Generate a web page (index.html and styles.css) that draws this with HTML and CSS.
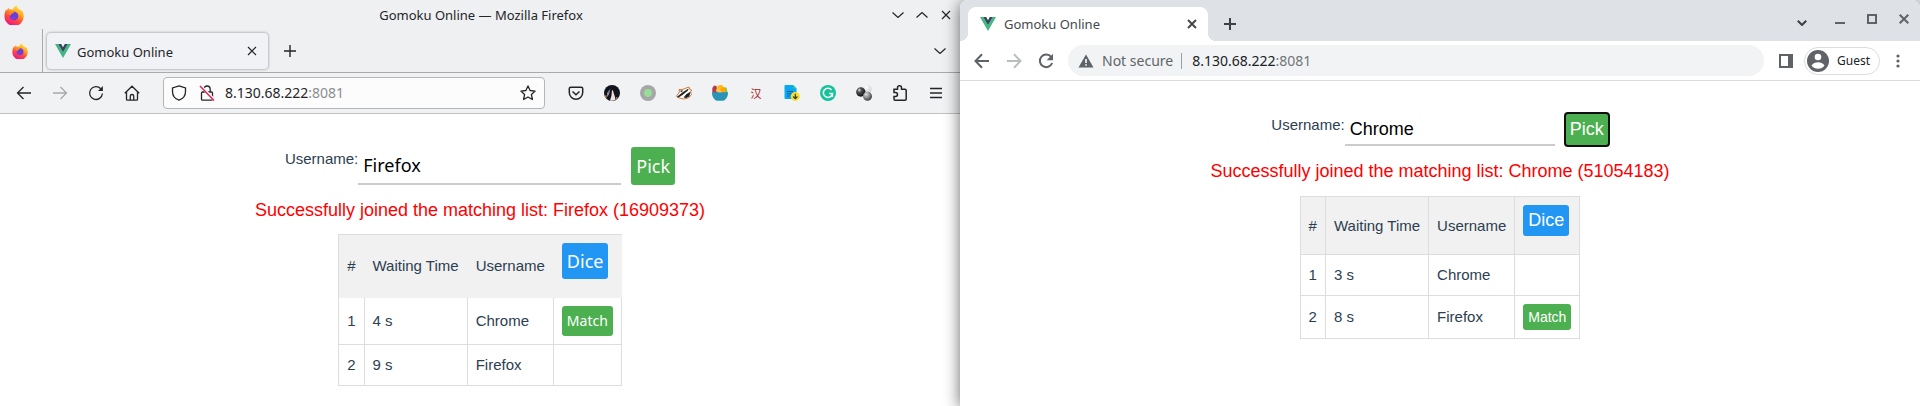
FILE: index.html
```html
<!DOCTYPE html>
<html lang="en">
<head>
<meta charset="utf-8">
<title>Gomoku Online</title>
<link rel="stylesheet" href="styles.css">
</head>
<body>
<svg class="defs" aria-hidden="true">
  <defs>
    <linearGradient id="flame" x1="0.8" y1="0" x2="0.3" y2="1">
      <stop offset="0" stop-color="#fff44f"/><stop offset="0.35" stop-color="#ffa823"/><stop offset="0.65" stop-color="#ff4a3d"/><stop offset="1" stop-color="#f0108a"/>
    </linearGradient>
    <radialGradient id="dark-ball" cx="0.35" cy="0.3" r="0.7"><stop offset="0" stop-color="#eee"/><stop offset="0.3" stop-color="#555"/><stop offset="1" stop-color="#111"/></radialGradient>
    <radialGradient id="gray-ball" cx="0.35" cy="0.3" r="0.7"><stop offset="0" stop-color="#ddd"/><stop offset="1" stop-color="#444"/></radialGradient>
    <radialGradient id="light-ball" cx="0.35" cy="0.3" r="0.8"><stop offset="0" stop-color="#fff"/><stop offset="1" stop-color="#ccc"/></radialGradient>
    <symbol id="fox" viewBox="0 0 20 20">
      <path d="M12.500 0.200c.3 1.700 1.300 2.700 2.400 3.800.9.300 1.600.9 1.900 1.600l.8-.6c1.300 1.500 2 3.500 2 5.500A9.600 9.400 0 1 1 .6 10c0-2.200.7-4.400 1.900-6l.2 1.700C3.400 4.200 4.300 3.300 5.100 2.800v1.700c1.300-.3 2.600-.2 3.700.2 1-2 2-3.800 3.700-4.500z" fill="url(#flame)"/>
      <circle cx="10" cy="11" r="4.300" fill="#6b3fd6"/>
      <path d="M5.500 6.700c1.500-.8 3.500-.7 4.700.2-.2 1.400-1.800 1.400-2.900 1.800-.5.600.2 1.600-.8 1.700-1.200-.8-1.700-2.300-1-3.700z" fill="#ff8a1e"/>
      <path d="M7 12.500c1.300.8 2.700.6 4-.2-.5 1.900-3 2.300-4 .2z" fill="#b833e1"/>
    </symbol>
    <symbol id="vue" viewBox="0 0 16 14">
      <path d="M0 0h3.200L8 8.300 12.800 0H16L8 13.900z" fill="#41b883"/>
      <path d="M3.200 0h3L8 3.200 9.800 0h3L8 8.300z" fill="#34495e"/>
    </symbol>
    <symbol id="chev" viewBox="0 0 12 6"><path d="M.5.500 6 5.500 11.500.5" fill="none" stroke="currentColor" stroke-width="1.200"/></symbol>
    <symbol id="cross" viewBox="0 0 10 10"><path d="m1 1 8 8M9 1 1 9" fill="none" stroke="currentColor" stroke-width="1.200"/></symbol>
    <symbol id="plus" viewBox="0 0 12 12"><path d="M6 0v12M0 6h12" fill="none" stroke="currentColor" stroke-width="1.400"/></symbol>
  </defs>
</svg>

<main class="desktop">
  <section class="window firefox" aria-label="Mozilla Firefox">
    <header class="ff-title">
      <svg class="i20"><use href="#fox"/></svg>
      <span>Gomoku Online — Mozilla Firefox</span>
      <div class="ff-controls">
        <button aria-label="Minimize"><svg width="12" height="6"><use href="#chev"/></svg></button>
        <button aria-label="Maximize"><svg class="flip" width="12" height="6"><use href="#chev"/></svg></button>
        <button aria-label="Close"><svg width="10" height="10"><use href="#cross"/></svg></button>
      </div>
    </header>

    <nav class="ff-tabs" aria-label="Tabs">
      <button class="ff-pinned" aria-label="Firefox"><svg class="i16"><use href="#fox"/></svg></button>
      <div class="ff-tab">
        <svg width="16" height="14"><use href="#vue"/></svg>
        <span>Gomoku Online</span>
        <button aria-label="Close tab"><svg width="10" height="10"><use href="#cross"/></svg></button>
      </div>
      <button class="ff-new" aria-label="New tab"><svg width="12" height="12"><use href="#plus"/></svg></button>
      <button class="ff-all" aria-label="List all tabs"><svg width="12" height="6"><use href="#chev"/></svg></button>
    </nav>

    <div class="ff-bar">
      <div class="ff-nav">
        <button aria-label="Back"><svg class="i16 line" viewBox="0 0 16 16"><path d="M15 8H1.500M7.500 2 1.500 8l6 6"/></svg></button>
        <button aria-label="Forward" disabled><svg class="i16 line" viewBox="0 0 16 16"><path d="M1 8h13.500M8.500 2l6 6-6 6"/></svg></button>
        <button aria-label="Reload"><svg class="i16 line" viewBox="0 0 16 16"><path d="M12.800 3.800A6.400 6.400 0 1 0 14.400 8.500"/><path d="M14.900 1v5H10z" fill="currentColor" stroke="none"/></svg></button>
        <button aria-label="Home"><svg class="i16 line" viewBox="0 0 16 16"><path d="M.8 8.200 8 1.200l7.200 7M2.500 7v7.200q0 1 1 1h9q1 0 1-1V7M6.300 15v-4q0-1.500 1.700-1.500T9.700 11v4"/></svg></button>
      </div>
      <div class="ff-url">
        <svg class="i16 line" viewBox="0 0 16 16"><path d="M8 .9 14.500 3v3.500C14.500 10.500 12 13.800 8 15.200 4 13.800 1.500 10.500 1.500 6.500V3z"/></svg>
        <svg class="i16 line" viewBox="0 0 16 16"><path d="M4.800 7V4.200a3.200 3.200 0 0 1 6.400 0V7M3.500 7h9q1 0 1 1v6.200q0 1-1 1h-9q-1 0-1-1V8q0-1 1-1z"/><path d="M1.500 1l14 14" stroke="#fcfcfc" stroke-width="3"/><path d="M1 1l14 14.500" stroke="#e22850" stroke-width="1.500"/></svg>
        <div class="address" role="textbox" aria-label="Address">8.130.68.222<span>:8081</span></div>
        <button aria-label="Bookmark"><svg class="i16 line" viewBox="0 0 16 16"><path d="m8 .9 2.100 4.600 5 .6-3.700 3.400 1 5L8 12l-4.400 2.500 1-5L.9 6.100l5-.6z" stroke-linejoin="round"/></svg></button>
      </div>
      <div class="ff-ext">
        <button aria-label="Pocket"><svg class="i16 line" viewBox="0 0 16 16"><path d="M2.500 2.300h11q1.200 0 1.200 1.200V7.500a6.700 6.700 0 0 1-13.400 0V3.500q0-1.200 1.200-1.200zM4.500 6.500 8 9.700l3.500-3.200" stroke-width="1.500"/></svg></button>
        <button aria-label="Profile picture"><svg class="i16" viewBox="0 0 16 16"><circle cx="8" cy="8" r="8" fill="#11131d"/><path d="M8 5q1.500.3 1.500 2.500L11 12l.5 2.800q-3 1.500-5.500.7l1.500-5z" fill="#f2dfe0"/><path d="M3 8 6.500 3.500 5 9.500 3 12z" fill="#8a879a"/><path d="M.6 10.500 2.500 10.500v3z" fill="#e0a057"/><path d="M12 12l2.300 1-2 1.700z" fill="#b98563"/></svg></button>
        <button aria-label="Status"><svg class="i16" viewBox="0 0 16 16"><circle cx="8" cy="8" r="8" fill="#a6a6a6"/><circle cx="8" cy="8" r="4" fill="#98dc98"/></svg></button>
        <button aria-label="Badger"><svg class="i16" viewBox="0 0 16 16"><path d="M.5 11 3.500 7 3 4.500 6 4.600 13 2l.7 2.500 2 .5-1.200 2 1 2.500-3 3.500-5 1-6-1.500z" fill="#fff" stroke="#d27a3b"/><path d="M1 11.800 7 7l5.500-3.500-.5 2L6.500 10l-4 2.500zM7.500 12.500l3-3.500 4-2.200-1.200 4.700-3 1.500zM4.300 5.600l3-.2L5 7.500z" fill="#222"/></svg></button>
        <button aria-label="Bowl"><svg class="i16" viewBox="0 0 16 16"><path d="M.3 3 2 .6 4.500 1 6 8H.3z" fill="#b63a4c"/><path d="M11 3q2.500-1.500 3.500 0L15.700 8H11z" fill="#7dc540"/><circle cx="8.500" cy="3.300" r="3.300" fill="#ffb914"/><circle cx="11.300" cy="5" r="2.600" fill="#ffa500"/><circle cx="6" cy="5.300" r="2" fill="#ffc83d"/><path d="M0 7.300h16C16 12 14 14.500 11.500 15.800h-7C2 14.500 0 12 0 7.300z" fill="#2b93b5"/></svg></button>
        <button class="han" aria-label="Chinese converter" lang="zh">汉</button>
        <button aria-label="Download document"><svg class="i16" viewBox="0 0 16 16"><path d="M1.500 0H9l3.500 3.500V14h-11q-1 0-1-1V1q0-1 1-1z" fill="#09a8f0"/><path d="M9 0l3.500 3.500H9z" fill="#15d0a0"/><path d="M3 6.500h6M3 8.700h5M3 11h3" stroke="#075a9d"/><circle cx="11.300" cy="11.400" r="4.500" fill="#fddc2e"/><path d="M11.300 8.700v4.800M9.200 11.500l2.100 2.200 2.100-2.200" fill="none" stroke="#333" stroke-width="1.100"/></svg></button>
        <button aria-label="Grammar"><svg class="i16" viewBox="0 0 16 16"><circle cx="8" cy="8" r="8" fill="#15c39a"/><path d="M11.600 5A4.600 4.600 0 1 0 12.500 8.600H9.200M12.400 8.600v3.400" fill="none" stroke="#fff" stroke-width="1.500"/></svg></button>
        <button aria-label="Spheres"><svg class="i16" viewBox="0 0 16 16"><circle cx="11.500" cy="4" r="4" fill="url(#light-ball)"/><circle cx="4.800" cy="7" r="4.700" fill="url(#dark-ball)"/><circle cx="11.500" cy="11.200" r="4.500" fill="url(#gray-ball)"/></svg></button>
        <button aria-label="Extensions"><svg class="i16 line" viewBox="0 0 16 16"><path d="M2 4.200h3.500V2.800a2 2 0 0 1 4 0V4.200H13q1.200 0 1.200 1.200v8.600q0 1.200-1.200 1.200H3.200Q2 15.200 2 14v-2.600h1.600a1.900 1.900 0 0 0 0-3.800H2z" stroke-width="1.500"/></svg></button>
        <button aria-label="Menu"><svg class="i16 line" viewBox="0 0 16 16"><path d="M2 3.500h12M2 8h12M2 12.500h12" stroke-width="1.400"/></svg></button>
      </div>
    </div>

    <div class="page">
      <form class="join">
        <label for="ff-name">Username:</label>
        <input id="ff-name" type="text" value="Firefox">
        <button class="btn green" type="button">Pick</button>
      </form>
      <p class="message">Successfully joined the matching list: Firefox (16909373)</p>
      <table>
        <thead>
          <tr><th>#</th><th>Waiting Time</th><th>Username</th><th><button class="btn blue">Dice</button></th></tr>
        </thead>
        <tbody>
          <tr><td>1</td><td>4 s</td><td>Chrome</td><td><button class="btn green small">Match</button></td></tr>
          <tr><td>2</td><td>9 s</td><td>Firefox</td><td></td></tr>
        </tbody>
      </table>
    </div>
  </section>

  <section class="window chrome" aria-label="Chrome">
    <header class="ch-strip">
      <div class="ch-tab">
        <svg width="16" height="14"><use href="#vue"/></svg>
        <span>Gomoku Online</span>
        <button aria-label="Close tab"><svg width="10" height="10" class="bold" viewBox="0 0 10 10"><path d="m1 1 8 8M9 1 1 9"/></svg></button>
      </div>
      <button class="ch-new" aria-label="New tab"><svg width="12" height="12" class="bold" viewBox="0 0 12 12"><path d="M6 0v12M0 6h12"/></svg></button>
      <div class="ch-controls">
        <button class="ch-search" aria-label="Search tabs"><svg width="10" height="6" class="bold" viewBox="0 0 10 6"><path d="m.8.800 4.200 4.200L9.200.8"/></svg></button>
        <button aria-label="Minimize"><svg width="10" height="10" class="bold" viewBox="0 0 10 10"><path d="M0 9h10"/></svg></button>
        <button aria-label="Maximize"><svg width="10" height="10" class="bold" viewBox="0 0 10 10"><path d="M1 1h8v8H1z"/></svg></button>
        <button aria-label="Close"><svg width="10" height="10" class="bold" viewBox="0 0 10 10"><path d="m.7.700 8.600 8.600M9.300.7.700 9.300"/></svg></button>
      </div>
    </header>

    <div class="ch-bar">
      <button aria-label="Back"><svg class="i16 bold" viewBox="0 0 16 16"><path d="M15 8H2M8 1.300 1.500 8 8 14.700"/></svg></button>
      <button aria-label="Forward" disabled><svg class="i16 bold" viewBox="0 0 16 16"><path d="M1 8h13M8 1.300 14.500 8 8 14.700"/></svg></button>
      <button aria-label="Reload"><svg class="i16 bold" viewBox="0 0 16 16"><path d="M13.200 4A6.300 6.300 0 1 0 14.100 10"/><path d="M15 .8v6.400H8.600z" fill="currentColor" stroke="none"/></svg></button>
      <div class="omnibox">
        <svg class="i16" viewBox="0 0 16 16"><path d="M8 1.500 15.500 14.500H.5z" fill="#5f6368"/><path d="M8 6v4M8 11.200v1.600" stroke="#fff" stroke-width="1.600"/></svg>
        <span class="insecure">Not secure</span>
        <div class="address" role="textbox" aria-label="Address">8.130.68.222<span>:8081</span></div>
      </div>
      <button class="ch-side" aria-label="Side panel"><svg width="14" height="14" viewBox="0 0 14 14"><path d="M0 0h14v14H0zM2 2v10h7V2z" fill="currentColor" fill-rule="evenodd"/></svg></button>
      <button class="guest"><svg width="22" height="22" viewBox="0 0 22 22"><circle cx="11" cy="11" r="11" fill="#5f6368"/><circle cx="11" cy="7" r="3.300" fill="#fff"/><path d="M4.500 15.500Q7 12.300 11 12.300t6.500 3.200Q15 18.800 11 18.800T4.500 15.500z" fill="#fff"/></svg>Guest</button>
      <button class="ch-menu" aria-label="Menu"><svg class="i16" viewBox="0 0 16 16" fill="currentColor"><circle cx="8" cy="3" r="1.600"/><circle cx="8" cy="8" r="1.600"/><circle cx="8" cy="13" r="1.600"/></svg></button>
    </div>

    <div class="page">
      <form class="join">
        <label for="ch-name">Username:</label>
        <input id="ch-name" type="text" value="Chrome">
        <button class="btn green focused" type="button">Pick</button>
      </form>
      <p class="message">Successfully joined the matching list: Chrome (51054183)</p>
      <table>
        <thead>
          <tr><th>#</th><th>Waiting Time</th><th>Username</th><th><button class="btn blue">Dice</button></th></tr>
        </thead>
        <tbody>
          <tr><td>1</td><td>3 s</td><td>Chrome</td><td></td></tr>
          <tr><td>2</td><td>8 s</td><td>Firefox</td><td><button class="btn green small">Match</button></td></tr>
        </tbody>
      </table>
    </div>
  </section>
</main>
</body>
</html>
```

FILE: styles.css
```css
* { box-sizing: border-box; }

body {
  margin: 0;
  font: 13px/20px "Noto Sans", sans-serif;
  color: #232629;
  background: #eff0f1;
}

button {
  display: flex;
  align-items: center;
  justify-content: center;
  flex: none;
  margin: 0;
  padding: 0;
  border: 0;
  background: none;
  color: inherit;
  font: inherit;
}

svg { display: block; flex: none; }

.defs { position: absolute; width: 0; height: 0; }
.i16 { width: 16px; height: 16px; }
.i20 { width: 20px; height: 20px; }
.line { fill: none; stroke: currentColor; stroke-width: 1.3; }
.bold { fill: none; stroke: currentColor; stroke-width: 2; }
.flip { transform: scaleY(-1); }

.desktop {
  display: grid;
  grid-template-columns: 1fr 1fr;
  min-height: 100vh;
  overflow: hidden;
}

.window { display: flex; flex-direction: column; min-width: 0; }

/* Firefox window */
.firefox { background: #eff0f2; }

.ff-title {
  display: grid;
  grid-template-columns: 1fr auto 1fr;
  align-items: center;
  height: 29px;
  padding: 0 2px 0 4px;
}

.ff-controls { display: flex; justify-content: flex-end; }
.ff-controls button { width: 24px; height: 24px; }

.ff-tabs {
  display: flex;
  align-items: center;
  height: 44px;
  border-bottom: 1px solid #a9aaac;
}

.ff-pinned {
  align-self: stretch;
  width: 43px;
  padding-right: 2px;
  border-right: 1px solid #a9aaac;
}

.ff-tab {
  display: flex;
  align-items: center;
  gap: 6px;
  width: 221px;
  height: 36px;
  margin: 0 8px 0 4px;
  padding: 0 6px 0 8px;
  border-radius: 4px;
  background: #f1f2f5;
  box-shadow: 0 0 3px rgba(0, 0, 0, 0.45);
}

.ff-tab span { flex: 1; padding-top: 2px; }
.ff-tab button { width: 20px; height: 20px; }
.ff-new { width: 28px; height: 28px; }
.ff-all { width: 32px; height: 32px; margin: 0 4px 0 auto; }

.ff-bar {
  display: flex;
  align-items: center;
  height: 41px;
  padding: 0 6px;
  border-bottom: 1px solid #bfc0c2;
  background: #f1f2f4;
}

.ff-nav, .ff-ext { display: flex; }
.ff-nav button, .ff-ext button { width: 36px; height: 32px; }
.ff-nav button:disabled { color: #a8a9ab; }

.ff-url {
  display: flex;
  align-items: center;
  gap: 12px;
  flex: 1;
  height: 32px;
  margin: 0 13px;
  padding: 0 8px 0 7px;
  border: 1px solid #b5b6b8;
  border-radius: 4px;
  background: #fcfcfc;
}

.address { flex: 1; margin-left: -2px; font-size: 14px; }
.address span { color: #8b8d90; }
.ff-ext .han { color: #b01c1c; font: 11px/16px "Noto Sans CJK SC", sans-serif; }

/* Chrome window */
.chrome {
  position: relative;
  border-radius: 8px 8px 0 0;
  background: #fff;
  box-shadow: 0 2px 16px rgba(0, 0, 0, 0.6);
}

.ch-strip {
  display: flex;
  align-items: center;
  height: 41px;
  padding: 0 4px 0 8px;
  border-radius: 8px 8px 0 0;
  background: #dee1e6;
}

.ch-tab {
  position: relative;
  align-self: flex-end;
  display: flex;
  align-items: center;
  gap: 8px;
  width: 240px;
  height: 34px;
  padding: 0 8px 0 12px;
  border-radius: 8px 8px 0 0;
  background: #fff;
  color: #45494d;
}

.ch-tab::before, .ch-tab::after {
  content: "";
  position: absolute;
  bottom: 0;
  width: 8px;
  height: 8px;
}

.ch-tab::before { right: 100%; background: radial-gradient(circle at 0 0, transparent 8px, #fff 8px); }
.ch-tab::after { left: 100%; background: radial-gradient(circle at 100% 0, transparent 8px, #fff 8px); }
.ch-tab span { flex: 1; }
.ch-tab button { width: 16px; height: 16px; }
.ch-new { width: 28px; height: 28px; margin: 7px 0 0 8px; color: #3c4043; }
.ch-controls { display: flex; margin-left: auto; color: #5f6368; }
.ch-controls button { width: 24px; height: 24px; margin-left: 8px; }
.ch-controls .ch-search { margin: 4px 6px 0 0; color: #3c4043; }

.ch-bar {
  display: flex;
  align-items: center;
  height: 40px;
  padding: 0 6px;
  border-bottom: 1px solid #dadce0;
  color: #5f6368;
}

.ch-bar > button { width: 32px; height: 32px; }
.ch-bar > button:disabled { color: #babcbe; }

.omnibox {
  display: flex;
  align-items: center;
  flex: 1;
  height: 31px;
  margin: 0 8px 0 6px;
  padding: 0 10px;
  border-radius: 16px;
  background: #f1f3f4;
}

.insecure {
  margin: 0 10px 0 8px;
  padding-right: 8px;
  border-right: 1px solid #9aa0a6;
  font-size: 14px;
  line-height: 16px;
}

.omnibox .address { margin: 0; color: #202124; }
.omnibox .address span { color: #72767a; }
.ch-bar .ch-side { width: 28px; }

.ch-bar .guest {
  gap: 8px;
  width: auto;
  height: 28px;
  margin: 0 2px 0 4px;
  padding: 0 9px 0 2px;
  border: 1px solid #dadce0;
  border-radius: 14px;
  color: #202124;
  font-size: 12px;
}

/* Web page shown in both windows */
.page {
  flex: 1;
  display: flex;
  flex-direction: column;
  align-items: center;
  padding: 32px 16px 16px;
  background: #fff;
  color: #2c3e50;
  font: 15px/24px "Liberation Sans", Arial, sans-serif;
}

.firefox .page { padding-top: 33px; }

.join { display: flex; }

.join input {
  width: 210px;
  padding: 0 5px;
  border: 0;
  border-bottom: 2px solid #ccc;
  outline: 0;
  background: none;
  color: #000;
  font: 18px/24px "Liberation Sans", Arial, sans-serif;
}

.firefox .join input {
  width: 263px;
  font-family: "Noto Sans", sans-serif;
}

.message {
  margin: 13px 0;
  color: #f00;
  font-size: 18px;
}

.firefox .message { margin-bottom: 12px; }

.btn {
  padding: 5px;
  border-radius: 3px;
  color: #fff;
  font: 18px/21px "Liberation Sans", Arial, sans-serif;
}

.firefox .btn { font-family: "Noto Sans", sans-serif; line-height: 26px; }
.green { background: #4caf50; }
.blue { margin-bottom: 10px; background: #2196f3; }
.btn.small { font-size: 14px; line-height: 16px; }
.firefox .btn.small { line-height: 20px; }
.join .btn { margin-left: 10px; padding: 6px 5px; }
.focused { outline: 2px solid #101010; outline-offset: -1px; }

table {
  border-top: 1px solid #ddd;
  border-left: 1px solid #ddd;
  border-collapse: separate;
  border-spacing: 0;
}

th, td {
  padding: 8px;
  border-right: 1px solid #ddd;
  border-bottom: 1px solid #ddd;
  text-align: left;
}

th { background: #f1f1f1; font-weight: 400; }
.firefox th { border-color: #f1f1f1; }
```
